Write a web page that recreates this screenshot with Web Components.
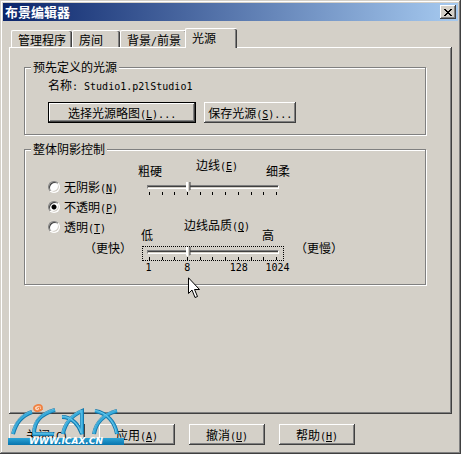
<!DOCTYPE html>
<html lang="zh-CN">
<head>
<meta charset="utf-8">
<title>布景编辑器</title>
<style>
  html {
    --face: #d4d0c8;
    --light: #fff;
    --shadow: #808080;
    --dark: #404040;
    --latin: 10px/10px "DejaVu Sans Mono", monospace;
  }

  body {
    margin: 0;
    background: var(--face);
    color: #000;
    font: 12px/14px "Noto Sans CJK SC", sans-serif;
    cursor: default;
  }
</style>
</head>
<body>
<dialog-window caption="布景编辑器">
  <tab-strip slot="tabs">
    <tab-item>管理程序</tab-item>
    <tab-item>房间</tab-item>
    <tab-item>背景<latin-text>/</latin-text>前景</tab-item>
    <tab-item selected>光源</tab-item>
  </tab-strip>

  <group-box>
    <span slot="legend">预先定义的光源</span>
    <light-source name="Studio1.p2lStudio1">
      <push-button default>选择光源略图<access-key>L</access-key><latin-text>...</latin-text></push-button>
      <push-button compact>保存光源<access-key>S</access-key><latin-text>...</latin-text></push-button>
    </light-source>
  </group-box>

  <group-box>
    <span slot="legend">整体阴影控制</span>
    <shadow-settings>
      <radio-list slot="modes">
        <radio-option>无阴影<access-key>N</access-key></radio-option>
        <radio-option checked>不透明<access-key>P</access-key></radio-option>
        <radio-option>透明<access-key>T</access-key></radio-option>
      </radio-list>
      <span slot="faster">（更快）</span>
      <tick-slider low="粗硬" high="细柔" value="3">边线<access-key>E</access-key></tick-slider>
      <tick-slider class="quality" focused low="低" high="高" value="3" scale="0:1,3:8,7:128,10:1024">边线品质<access-key>Q</access-key></tick-slider>
      <span slot="slower">（更慢）</span>
    </shadow-settings>
  </group-box>

  <push-button slot="actions">关闭<access-key>C</access-key></push-button>
  <push-button slot="actions">应用<access-key>A</access-key></push-button>
  <push-button slot="actions">撤消<access-key>U</access-key></push-button>
  <push-button slot="actions">帮助<access-key>H</access-key></push-button>
</dialog-window>
<site-mark></site-mark>
<mouse-pointer></mouse-pointer>

<script>
class BaseElement extends HTMLElement {
  constructor() {
    super();
    this.shadowDOM = this.attachShadow({ mode: 'open' });
  }

  connectedCallback() {
    this.render();
  }
}

// Half-width run inside Chinese text; no white space may surround the slot.
class LatinText extends BaseElement {
  render() {
    this.shadowDOM.innerHTML = `<style>
        :host {
          display: inline;
          font: var(--latin);
          white-space: pre-wrap;
        }

        style {
          display: none;
        }
      </style><slot></slot>`;
  }
}

class AccessKey extends BaseElement {
  render() {
    this.shadowDOM.innerHTML = `<style>
        :host {
          display: inline;
          font: var(--latin);
        }
      </style>(<u><slot></slot></u>)`;
  }
}

class DialogWindow extends BaseElement {
  render() {
    this.shadowDOM.innerHTML = `
      <style>
        :host {
          display: flex;
          flex-direction: column;
          box-sizing: border-box;
          min-height: 100vh;
          padding: 3px;
          background: var(--face);
          box-shadow: inset -1px -1px var(--dark), inset 1px 1px var(--face),
            inset -2px -2px var(--shadow), inset 2px 2px var(--light);
        }

        header {
          display: flex;
          align-items: center;
          justify-content: space-between;
          height: 18px;
          padding: 0 2px;
          background: linear-gradient(to right, #0a246a, #a6caf0);
        }

        h1 {
          margin: 0;
          color: #fff;
          font-size: 13px;
          line-height: 18px;
        }

        header button {
          display: flex;
          align-items: center;
          justify-content: center;
          width: 16px;
          height: 14px;
          padding: 0;
          border: none;
          background: var(--face);
          box-shadow: inset -1px -1px var(--dark), inset 1px 1px var(--light), inset -2px -2px var(--shadow);
        }

        .body {
          display: flex;
          flex: 1;
          flex-direction: column;
          padding: 7px 6px 6px;
        }

        main {
          display: flex;
          flex: 1;
          flex-direction: column;
          gap: 7px;
          padding: 13px 26px 13px 15px;
          box-shadow: inset -1px -1px var(--dark), inset 1px 1px var(--light), inset -2px -2px var(--shadow);
        }

        footer {
          display: flex;
          gap: 14px;
          padding-top: 10px;
        }
      </style>

      <header>
        <h1>${this.getAttribute('caption')}</h1>
        <button type="button" aria-label="关闭">
          <svg width="8" height="7" viewBox="0 0 8 7" shape-rendering="crispEdges">
            <path d="M0 0h2v1h1v1h2v-1h1v-1h2v1h-1v1h-1v1h-1v1h1v1h1v1h1v1h-2v-1h-1v-1h-2v1h-1v1h-2v-1h1v-1h1v-1h1v-1h-1v-1h-1v-1h-1z"/>
          </svg>
        </button>
      </header>
      <div class="body">
        <slot name="tabs"></slot>
        <main><slot></slot></main>
        <footer><slot name="actions"></slot></footer>
      </div>
    `;
  }
}

class TabStrip extends BaseElement {
  render() {
    this.shadowDOM.innerHTML = `
      <style>
        :host {
          display: flex;
          align-items: flex-end;
          height: 19px;
          padding-left: 2px;
        }
      </style>
      <slot></slot>
    `;
    this.setAttribute('role', 'tablist');
  }
}

class TabItem extends BaseElement {
  render() {
    this.shadowDOM.innerHTML = `
      <style>
        :host {
          display: block;
        }

        :host([selected]) {
          z-index: 1;
          margin: 0 0 -1px -2px;
        }

        button {
          display: block;
          box-sizing: border-box;
          min-width: 48px;
          height: 17px;
          padding: 1px 6px 0;
          border: solid;
          border-width: 1px 0 0 1px;
          border-color: var(--light);
          border-radius: 2px 2px 0 0;
          background: var(--face);
          box-shadow: inset -1px 0 var(--dark), inset -2px 0 var(--shadow);
          color: inherit;
          font: inherit;
          text-align: left;
          white-space: nowrap;
        }

        :host([selected]) button {
          min-width: 52px;
          height: 20px;
          padding-bottom: 3px;
        }
      </style>
      <button type="button" role="tab" aria-selected="${this.hasAttribute('selected')}"><slot></slot></button>
    `;
  }
}

class GroupBox extends BaseElement {
  render() {
    this.shadowDOM.innerHTML = `
      <style>
        :host {
          display: block;
        }

        fieldset {
          min-width: 0;
          margin: 0;
          padding: 0 23px;
          border: 1px solid var(--shadow);
          box-shadow: 1px 1px var(--light), inset 1px 1px var(--light);
        }

        legend {
          margin-left: -17px;
          padding: 0 2px;
          background: var(--face);
        }
      </style>
      <fieldset>
        <legend><slot name="legend"></slot></legend>
        <slot></slot>
      </fieldset>
    `;
  }
}

class LightSource extends BaseElement {
  render() {
    this.shadowDOM.innerHTML = `
      <style>
        :host {
          display: block;
          padding: 4px 0 11px;
        }

        p {
          margin: 0 0 10px;
        }

        div {
          display: flex;
          gap: 8px;
        }
      </style>
      <p>名称<latin-text>: ${this.getAttribute('name')}</latin-text></p>
      <div><slot></slot></div>
    `;
  }
}

class PushButton extends BaseElement {
  render() {
    this.shadowDOM.innerHTML = `
      <style>
        :host {
          display: block;
        }

        button {
          display: block;
          min-width: 76px;
          height: 21px;
          padding: 0 4px;
          border: none;
          background: var(--face);
          box-shadow: inset -1px -1px var(--dark), inset 1px 1px var(--light), inset -2px -2px var(--shadow);
          color: inherit;
          font: inherit;
          white-space: nowrap;
        }

        :host([default]) button {
          padding: 0 19px;
          border: 1px solid #000;
        }
      </style>
      <button type="button"><slot></slot></button>
    `;
  }
}

class ShadowSettings extends BaseElement {
  render() {
    this.shadowDOM.innerHTML = `
      <style>
        :host {
          display: grid;
          grid-template-columns: 84px 158px auto;
          justify-content: start;
          padding: 2px 0 9px;
        }

        .side {
          display: flex;
          flex-direction: column;
          gap: 4px;
          padding-top: 19px;
        }

        .faster {
          align-self: flex-end;
        }

        .sliders {
          display: flex;
          flex-direction: column;
          gap: 22px;
          padding-left: 6px;
        }

        .slower {
          align-self: end;
          padding: 0 0 20px 5px;
        }
      </style>
      <div class="side">
        <slot name="modes"></slot>
        <div class="faster"><slot name="faster"></slot></div>
      </div>
      <div class="sliders"><slot></slot></div>
      <div class="slower"><slot name="slower"></slot></div>
    `;
  }
}

class RadioList extends BaseElement {
  render() {
    this.shadowDOM.innerHTML = `
      <style>
        :host {
          display: block;
        }
      </style>
      <slot></slot>
    `;
    this.setAttribute('role', 'radiogroup');
    this.addEventListener('pick', (event) => {
      this.querySelectorAll('radio-option').forEach((option) => {
        option.checked = option === event.target;
      });
    });
  }
}

class RadioOption extends BaseElement {
  set checked(value) {
    this.shadowDOM.querySelector('input').checked = value;
  }

  render() {
    this.shadowDOM.innerHTML = `
      <style>
        :host {
          display: block;
        }

        label {
          display: flex;
          align-items: center;
          gap: 4px;
          height: 20px;
          white-space: nowrap;
        }

        input {
          appearance: none;
          box-sizing: border-box;
          width: 12px;
          height: 12px;
          margin: 0;
          border: 1px solid;
          border-color: var(--shadow) var(--light) var(--light) var(--shadow);
          border-radius: 50%;
          background: #fff;
          box-shadow: inset 1px 1px var(--dark), inset -1px -1px var(--face);
        }

        input:checked {
          background: radial-gradient(circle, #000 2px, #fff 3px);
        }
      </style>
      <label><input type="radio" ${this.hasAttribute('checked') ? 'checked' : ''}><span><slot></slot></span></label>
    `;
    this.shadowDOM.querySelector('input').addEventListener('change', () => {
      this.dispatchEvent(new CustomEvent('pick', { bubbles: true }));
    });
  }
}

class TickSlider extends BaseElement {
  get value() {
    return this.shadowDOM.querySelector('input').value;
  }

  render() {
    const scale = this.getAttribute('scale');
    const numbers = scale ? scale.split(',').map((mark) => {
      const [tick, text] = mark.split(':');
      return `<span style="grid-column: ${Number(tick) + 1}">${text}</span>`;
    }).join('') : '';

    this.shadowDOM.innerHTML = `
      <style>
        :host {
          display: block;
        }

        label {
          display: block;
          margin-left: 6px;
          text-align: center;
        }

        .ends {
          display: flex;
          justify-content: space-between;
          margin: -8px 0 3px;
        }

        :host(.quality) .ends {
          margin: -4px 16px 4px 3px;
        }

        .box {
          margin: 0 6px 0 4px;
          border: 1px solid transparent;
        }

        :host([focused]) .box {
          border: 1px dotted #000;
        }

        input {
          appearance: none;
          display: block;
          box-sizing: border-box;
          width: calc(100% - 8px);
          height: 10px;
          margin: 0 4px;
          background: none;
          outline: none;
        }

        input::-webkit-slider-runnable-track {
          box-sizing: border-box;
          height: 4px;
          border: 1px solid;
          border-color: var(--shadow) var(--light) var(--light) var(--shadow);
          background: linear-gradient(var(--dark) 1px, var(--face) 1px);
        }

        input::-webkit-slider-thumb {
          appearance: none;
          width: 5px;
          height: 10px;
          margin-top: -4px;
          background: linear-gradient(to right, #fff 2px, var(--face) 2px, var(--face) 3px, var(--shadow) 3px, var(--shadow) 4px, var(--dark) 4px);
          clip-path: polygon(0 0, 100% 0, 100% 75%, 50% 100%, 0 75%);
        }

        .ticks,
        .numbers {
          display: grid;
          grid-template-columns: repeat(11, minmax(0, 1fr));
          justify-items: center;
        }

        .ticks i {
          width: 1px;
          height: 3px;
          background: #000;
        }

        .numbers {
          margin: 0 6px 0 4px;
          padding: 2px 0;
          font: var(--latin);
        }

        .numbers:empty {
          display: none;
        }
      </style>
      <label for="range"><slot></slot></label>
      <div class="ends"><span>${this.getAttribute('low')}</span><span>${this.getAttribute('high')}</span></div>
      <div class="box">
        <input id="range" type="range" min="0" max="10" value="${this.getAttribute('value')}">
        <div class="ticks">${'<i></i>'.repeat(11)}</div>
      </div>
      <div class="numbers">${numbers}</div>
    `;
  }
}

class SiteMark extends BaseElement {
  render() {
    this.shadowDOM.innerHTML = `
      <style>
        :host {
          position: absolute;
          bottom: 9px;
          left: 8px;
          width: 116px;
        }

        svg {
          display: block;
        }

        div {
          height: 7px;
          background: linear-gradient(#2ba3d6, #0874ad);
          color: #fff;
          font: italic bold 9px/7px "DejaVu Sans", sans-serif;
          text-align: center;
        }
      </style>
      <svg width="116" height="35" viewBox="0 0 116 35" fill="none">
        <defs>
          <g id="strokes">
            <path d="M5 31C8 20 13 13 24 9"/>
            <path d="M47 7C33 11 26 18 26 31H46"/>
            <path d="M54 14C64 14 71 22 74 31V8C65 12 57 20 55 31"/>
            <path d="M109 8C97 11 88 19 86 31"/>
            <path d="M87 8C99 10 107 19 109 31"/>
          </g>
        </defs>
        <use href="#strokes" stroke="#1478ac" stroke-width="4"/>
        <use href="#strokes" stroke="#38addd" stroke-width="2"/>
        <use href="#strokes" stroke="#8bd8f2" stroke-width="1" transform="translate(-1 -1)" opacity=".6"/>
        <ellipse cx="30" cy="5" rx="4" ry="3" fill="#fbd9c2" stroke="#f08243" stroke-width="2" transform="rotate(-15 30 5)"/>
        <path d="M29 6q0-2 3-2l-1 3q2 1 4-1" stroke="#f08243"/>
      </svg>
      <div>WWW.ICAX.CN</div>
    `;
  }
}

class MousePointer extends BaseElement {
  render() {
    this.shadowDOM.innerHTML = `
      <style>
        :host {
          position: absolute;
          top: 277px;
          left: 188px;
          pointer-events: none;
        }

        svg {
          display: block;
        }
      </style>
      <svg width="13" height="22" viewBox="0 0 13 22">
        <path d="M.5 .8V16.5L4 13L7 20.5L9.500 19.500L6.500 12.500H11.500Z" fill="#fff" stroke="#000"/>
      </svg>
    `;
  }
}

customElements.define('latin-text', LatinText);
customElements.define('access-key', AccessKey);
customElements.define('dialog-window', DialogWindow);
customElements.define('tab-strip', TabStrip);
customElements.define('tab-item', TabItem);
customElements.define('group-box', GroupBox);
customElements.define('light-source', LightSource);
customElements.define('push-button', PushButton);
customElements.define('shadow-settings', ShadowSettings);
customElements.define('radio-list', RadioList);
customElements.define('radio-option', RadioOption);
customElements.define('tick-slider', TickSlider);
customElements.define('site-mark', SiteMark);
customElements.define('mouse-pointer', MousePointer);
</script>
</body>
</html>
